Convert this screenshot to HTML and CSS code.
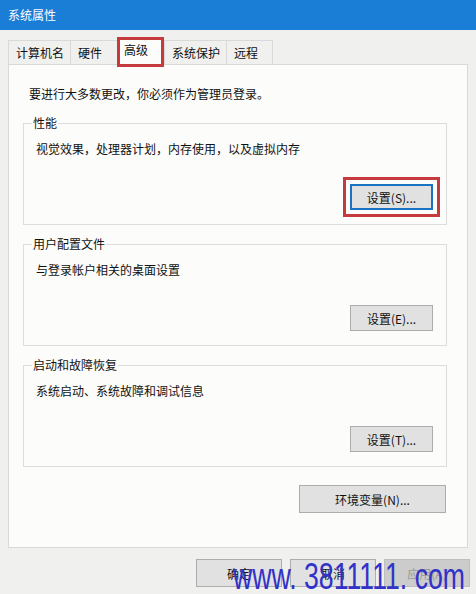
FILE: index.html
```html
<!DOCTYPE html>
<html lang="zh-CN">
<head>
    <meta charset="UTF-8">
    <title>系统属性</title>
    <link rel="stylesheet" href="styles.css">
</head>
<body>

<div class="titlebar">系统属性</div>

<div class="tabs">
    <div class="tab">计算机名</div>
    <div class="tab">硬件</div>
    <div class="tab tab-active">高级</div>
    <div class="tab">系统保护</div>
    <div class="tab tab-last">远程</div>
</div>

<div class="panel">
    <p class="intro">要进行大多数更改，你必须作为管理员登录。</p>

    <fieldset class="group">
        <legend>性能</legend>
        <p class="desc">视觉效果，处理器计划，内存使用，以及虚拟内存</p>
        <div class="row">
            <button class="btn btn-default btn-marked">设置(S)...</button>
        </div>
    </fieldset>

    <fieldset class="group">
        <legend>用户配置文件</legend>
        <p class="desc">与登录帐户相关的桌面设置</p>
        <div class="row">
            <button class="btn">设置(E)...</button>
        </div>
    </fieldset>

    <fieldset class="group">
        <legend>启动和故障恢复</legend>
        <p class="desc">系统启动、系统故障和调试信息</p>
        <div class="row">
            <button class="btn">设置(T)...</button>
        </div>
    </fieldset>

    <div class="env-row">
        <button class="btn btn-wide">环境变量(N)...</button>
    </div>
</div>

<div class="footer">
    <button class="btn btn-footer">确定</button>
    <button class="btn btn-footer">取消</button>
    <button class="btn btn-footer" disabled>应用(A)</button>
</div>

<div class="watermark">www. 3811111. com</div>

</body>
</html>
```

FILE: styles.css
```css
body {
    margin: 0;
    width: 476px;
    height: 594px;
    overflow: hidden;
    position: relative;
    background-color: #f0f0ee;
    font-family: "Noto Sans CJK SC", "Noto Sans", sans-serif;
    font-size: 12px;
    line-height: 16px;
    color: #111;
}
p {
    margin: 0;
}
.titlebar {
    height: 30px;
    display: flex;
    align-items: center;
    padding-left: 8px;
    background-color: #1a7dd6;
    color: #fff;
}
.tabs {
    display: flex;
    height: 24px;
    margin: 10px 0 0 8px;
}
.tab {
    box-sizing: border-box;
    min-width: 47px;
    padding: 0 6px 0 7px;
    display: flex;
    align-items: center;
    border-top: 1px solid #d9d9d9;
    border-left: 1px solid #d9d9d9;
    background-color: #f0f0ee;
}
.tab-last {
    border-right: 1px solid #d9d9d9;
}
.tab-active {
    width: 47px;
    margin: -3px 0 -3px 0;
    padding: 0 0 4px 4px;
    border: 3px solid #c63a3d;
    background-color: #fcfcfa;
    z-index: 1;
}
.panel {
    box-sizing: border-box;
    height: 484px;
    margin: 0 8px;
    padding-top: 21px;
    border: 1px solid #d9d9d9;
    background-color: #fcfcfa;
}
.intro {
    margin-left: 20px;
}
.group {
    margin: 13px 20px 0 14px;
    padding: 0 13px 14px 12px;
    border: 1px solid #dcdcdc;
    min-width: 0;
}
.group + .group {
    margin-top: 11px;
}
.group legend {
    padding: 0 1px;
    margin-left: -4px;
}
.desc {
    margin-top: 10px;
}
.row {
    display: flex;
    justify-content: flex-end;
    margin-top: 27px;
}
.btn {
    box-sizing: border-box;
    width: 83px;
    height: 26px;
    padding: 0;
    border: 1px solid #adadad;
    background-color: #e1e1e1;
    font-family: inherit;
    font-size: 12px;
    color: #111;
}
.btn-default {
    border: 2px solid #1a72c4;
}
.btn-marked {
    outline: 3px solid #c63a3d;
    outline-offset: 4px;
}
.env-row {
    display: flex;
    justify-content: flex-end;
    margin: 18px 21px 0 0;
}
.btn-wide {
    width: 147px;
    height: 28px;
}
.footer {
    display: flex;
    justify-content: flex-end;
    gap: 8px;
    margin-top: 11px;
    padding-right: 6px;
}
.btn-footer {
    width: 86px;
    height: 28px;
}
.btn-footer:disabled {
    background-color: #cccccc;
    border-color: #bfbfbf;
    color: #999;
}
.watermark {
    position: absolute;
    left: 233px;
    top: 559px;
    font-family: "Liberation Sans", Arial, sans-serif;
    font-size: 36px;
    line-height: 36px;
    color: #3232c8;
    white-space: nowrap;
    transform: scaleX(0.74);
    transform-origin: left top;
}
```
